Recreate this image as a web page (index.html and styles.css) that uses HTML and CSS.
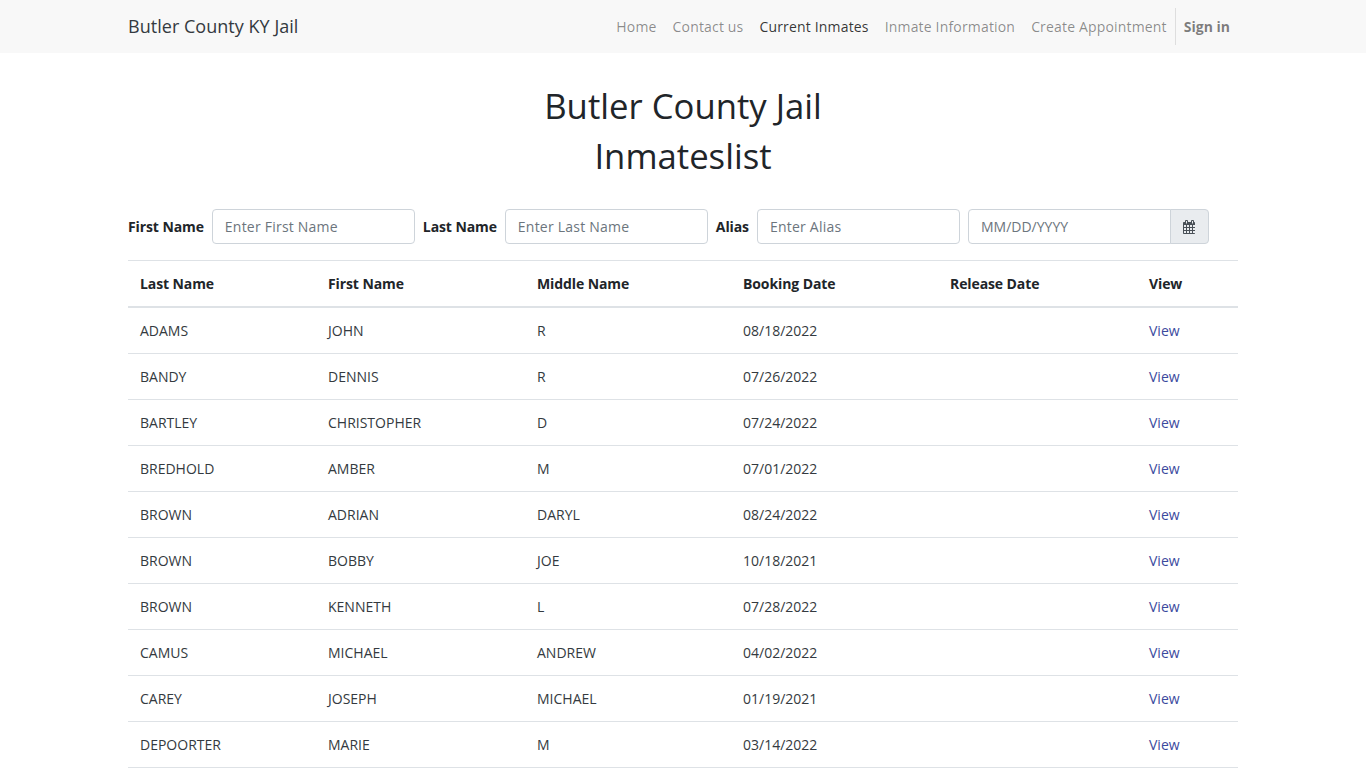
FILE: index.html
```html
<!DOCTYPE html>
<html lang="en">
<head>
    <meta charset="UTF-8">
    <meta name="viewport" content="width=device-width, initial-scale=1.0">
    <title>Butler County KY Jail</title>
    <link rel="stylesheet" href="styles.css">
</head>
<body>
    <nav class="navbar">
        <div class="container navbar-inner">
            <a class="brand" href="#">Butler County KY Jail</a>
            <ul class="nav">
                <li><a href="#">Home</a></li>
                <li><a href="#">Contact us</a></li>
                <li><a class="active" href="#">Current Inmates</a></li>
                <li><a href="#">Inmate Information</a></li>
                <li><a href="#">Create Appointment</a></li>
                <li class="nav-sign"><a href="#">Sign in</a></li>
            </ul>
        </div>
    </nav>

    <main class="container">
        <h1 class="title">Butler County Jail<br>Inmateslist</h1>

        <form class="search-form">
            <label for="firstName">First Name</label>
            <input type="text" id="firstName" class="form-control" placeholder="Enter First Name">
            <label for="lastName">Last Name</label>
            <input type="text" id="lastName" class="form-control" placeholder="Enter Last Name">
            <label for="alias">Alias</label>
            <input type="text" id="alias" class="form-control" placeholder="Enter Alias">
            <div class="input-group">
                <input type="text" class="form-control date-input" placeholder="MM/DD/YYYY">
                <span class="addon">
                    <svg class="icon-calendar" viewBox="0 0 13 14" width="13" height="14" aria-hidden="true">
                        <path fill="#495057" fill-rule="evenodd" d="M3 0h1a1 1 0 0 1 1 1v1h3V1a1 1 0 0 1 1-1h1a1 1 0 0 1 1 1v1h.2c.45 0 .8.35.8.8v10.4c0 .45-.35.8-.8.8H.8c-.45 0-.8-.35-.8-.8V2.8c0-.45.35-.8.8-.8H2V1a1 1 0 0 1 1-1zM3 1v2.4h1V1zM9 1v2.4h1V1zM1 5v2h2V5zm3 0v2h2V5zm3 0v2h2V5zm3 0v2h2V5zM1 8v2h2V8zm3 0v2h2V8zm3 0v2h2V8zm3 0v2h2V8zM1 11v2h2v-2zm3 0v2h2v-2zm3 0v2h2v-2zm3 0v2h2v-2z"/>
                    </svg>
                </span>
            </div>
        </form>

        <table class="table">
            <colgroup>
                <col class="col-last">
                <col class="col-first">
                <col class="col-middle">
                <col class="col-booking">
                <col class="col-release">
                <col class="col-view">
            </colgroup>
            <thead>
                <tr>
                    <th>Last Name</th>
                    <th>First Name</th>
                    <th>Middle Name</th>
                    <th>Booking Date</th>
                    <th>Release Date</th>
                    <th>View</th>
                </tr>
            </thead>
            <tbody>
                <tr><td>ADAMS</td><td>JOHN</td><td>R</td><td>08/18/2022</td><td></td><td><a href="#">View</a></td></tr>
                <tr><td>BANDY</td><td>DENNIS</td><td>R</td><td>07/26/2022</td><td></td><td><a href="#">View</a></td></tr>
                <tr><td>BARTLEY</td><td>CHRISTOPHER</td><td>D</td><td>07/24/2022</td><td></td><td><a href="#">View</a></td></tr>
                <tr><td>BREDHOLD</td><td>AMBER</td><td>M</td><td>07/01/2022</td><td></td><td><a href="#">View</a></td></tr>
                <tr><td>BROWN</td><td>ADRIAN</td><td>DARYL</td><td>08/24/2022</td><td></td><td><a href="#">View</a></td></tr>
                <tr><td>BROWN</td><td>BOBBY</td><td>JOE</td><td>10/18/2021</td><td></td><td><a href="#">View</a></td></tr>
                <tr><td>BROWN</td><td>KENNETH</td><td>L</td><td>07/28/2022</td><td></td><td><a href="#">View</a></td></tr>
                <tr><td>CAMUS</td><td>MICHAEL</td><td>ANDREW</td><td>04/02/2022</td><td></td><td><a href="#">View</a></td></tr>
                <tr><td>CAREY</td><td>JOSEPH</td><td>MICHAEL</td><td>01/19/2021</td><td></td><td><a href="#">View</a></td></tr>
                <tr><td>DEPOORTER</td><td>MARIE</td><td>M</td><td>03/14/2022</td><td></td><td><a href="#">View</a></td></tr>
            </tbody>
        </table>
    </main>
</body>
</html>
```

FILE: styles.css
```css
* {
    box-sizing: border-box;
}

body {
    margin: 0;
    font-family: 'Open Sans', 'Liberation Sans', sans-serif;
    font-size: 14px;
    line-height: 1.5;
    color: #212529;
    background: #fff;
}

a {
    text-decoration: none;
}

.container {
    width: 1110px;
    margin: 0 auto;
}

.navbar {
    height: 53px;
    background: #f8f8f8;
}

.navbar-inner {
    display: flex;
    align-items: center;
    justify-content: space-between;
    height: 100%;
}

.brand {
    font-size: 18px;
    letter-spacing: 0.03px;
    color: #343a40;
}

.nav {
    display: flex;
    align-items: center;
    margin: 0;
    padding: 0;
    list-style: none;
}

.nav a {
    display: block;
    padding: 8px;
    color: rgba(0, 0, 0, 0.45);
    letter-spacing: 0.17px;
}

.nav a.active {
    color: rgba(0, 0, 0, 0.8);
}

.nav-sign {
    border-left: 1px solid rgba(0, 0, 0, 0.1);
}

.nav-sign a {
    font-weight: 700;
    letter-spacing: 0;
    color: rgba(0, 0, 0, 0.5);
}

.title {
    margin: 28px 0;
    font-size: 34.7px;
    font-weight: 400;
    line-height: 50px;
    text-align: center;
}

.search-form {
    display: flex;
    align-items: center;
    height: 35px;
    margin-bottom: 16px;
}

.search-form label {
    margin-right: 8px;
    font-weight: 700;
    letter-spacing: -0.1px;
}

.form-control {
    width: 203px;
    height: 35px;
    margin-right: 8px;
    padding: 6px 12px;
    border: 1px solid #ced4da;
    border-radius: 4px;
    font-family: inherit;
    font-size: 14px;
    color: #495057;
}

.form-control::placeholder {
    color: #6c757d;
    opacity: 1;
    letter-spacing: 0.22px;
}

.input-group {
    display: flex;
}

.input-group .form-control {
    margin-right: 0;
    border-radius: 4px 0 0 4px;
}

.date-input.form-control::placeholder {
    letter-spacing: 0;
}

.addon {
    display: flex;
    align-items: center;
    justify-content: center;
    width: 39px;
    height: 35px;
    margin-left: -1px;
    border: 1px solid #ced4da;
    border-radius: 0 4px 4px 0;
    background: #e9ecef;
}

.table {
    width: 100%;
    border-collapse: collapse;
    table-layout: fixed;
}

.col-last { width: 188px; }
.col-first { width: 209px; }
.col-middle { width: 206px; }
.col-booking { width: 207px; }
.col-release { width: 199px; }
.col-view { width: 101px; }

.table th,
.table td {
    padding: 12px;
    border-top: 1px solid #dee2e6;
    text-align: left;
    vertical-align: top;
}

.table th {
    border-bottom: 2px solid #dee2e6;
    letter-spacing: -0.1px;
}

.table td {
    color: #343a40;
}

.table tbody tr:first-child td {
    border-top: 0;
}

.table tbody tr {
    border-bottom: 1px solid #dee2e6;
}

.table td a {
    color: #3b4a9e;
}
```
